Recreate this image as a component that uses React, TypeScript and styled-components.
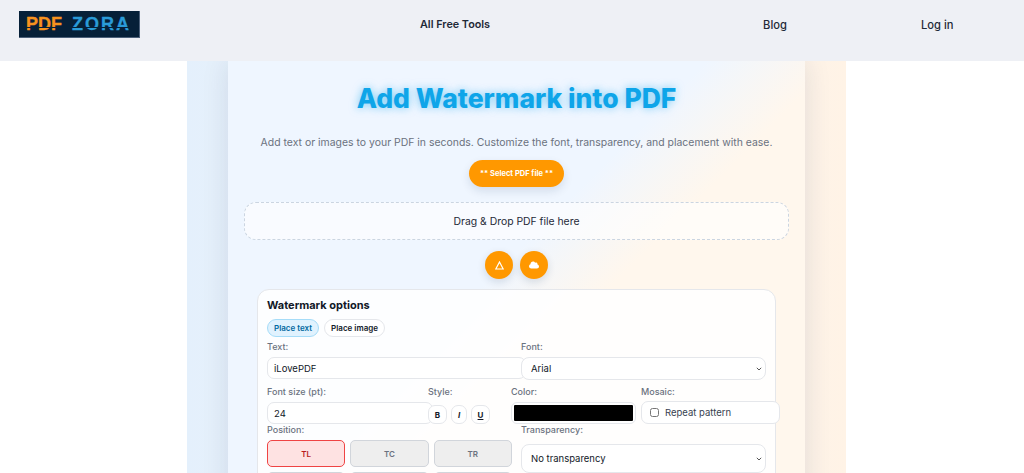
import styled, { createGlobalStyle } from 'styled-components';
import { FaCloud } from 'react-icons/fa';

const chevron =
  "data:image/svg+xml,%3Csvg xmlns='http://www.w3.org/2000/svg' width='6' height='4' viewBox='0 0 6 4' fill='none' stroke='%23555' stroke-width='1'%3E%3Cpath d='M.8.8 3 3l2.2-2.2'/%3E%3C/svg%3E";

const GlobalStyle = createGlobalStyle`
  html, body {
    margin: 0;
    padding: 0;
    height: 473px;
    overflow: hidden;
    background: #ffffff;
    font-family: Inter, "Liberation Sans", sans-serif;
  }
`;

const Header = styled.header`
  position: relative;
  z-index: 1;
  display: flex;
  align-items: flex-start;
  height: 61px;
  padding: 11px 0 0 19px;
  box-sizing: border-box;
  background: #eef0f5;
`;

const Logo = styled.div`
  position: relative;
  display: flex;
  align-items: center;
  gap: 10px;
  width: 121px;
  height: 27px;
  padding-left: 7px;
  box-sizing: border-box;
  background: #062038;
  border-right: 1px solid #4b5f78;
  border-bottom: 1px solid #4b5f78;
  font-family: "Liberation Sans", sans-serif;
  font-size: 18px;
  font-weight: 700;
  line-height: 27px;

  /* stencil cut through the letters */
  &::after {
    content: '';
    position: absolute;
    left: 6px;
    right: 8px;
    top: 16px;
    height: 1px;
    background: #062038;
  }
`;

const LogoPart = styled.span<{ $color: string; $spacing: number }>`
  color: ${(p) => p.$color};
  letter-spacing: ${(p) => p.$spacing}px;
  -webkit-text-stroke: 0.3px ${(p) => p.$color};
`;

const NavLink = styled.a<{ $left: number; $bold?: boolean }>`
  margin-left: ${(p) => p.$left}px;
  margin-top: 6px;
  color: #1f2937;
  font-size: ${(p) => (p.$bold ? 10.8 : 11.2)}px;
  font-weight: ${(p) => (p.$bold ? 600 : 500)};
  line-height: 16px;
`;

const Page = styled.main`
  width: 659px;
  margin-left: 187px;
  padding: 0 41px;
  box-sizing: border-box;
  background: linear-gradient(90deg, #e4f0fc, #fff3e6);
`;

const Card = styled.section`
  display: flex;
  flex-direction: column;
  align-items: center;
  width: 577px;
  padding: 19px 16px 24px;
  box-sizing: border-box;
  background: linear-gradient(135deg, #eff6ff 0%, #eff6ff 44%, #fff7ed 56%, #fff7ed 100%);
  box-shadow: 0 0 26px rgba(15, 40, 80, 0.11);
`;

const Title = styled.h1`
  margin: 0;
  color: #0ea5e9;
  font-size: 26.5px;
  font-weight: 800;
  line-height: 36px;
  text-shadow: 0 0 8px rgba(14, 165, 233, 0.55);
`;

const Subtitle = styled.p`
  margin: 19px 0 0;
  color: #6b7280;
  font-size: 10.45px;
  line-height: 16px;
  white-space: nowrap;
`;

const SelectButton = styled.button`
  width: 95px;
  height: 27px;
  margin-top: 9px;
  padding: 0;
  border: 0;
  border-radius: 14px;
  background: #ff9800;
  box-shadow: 0 4px 10px rgba(15, 40, 80, 0.12);
  color: #ffffff;
  font-family: inherit;
  font-size: 7.5px;
  font-weight: 700;
`;

const DropZone = styled.div`
  display: flex;
  align-items: center;
  justify-content: center;
  width: 100%;
  height: 38px;
  margin-top: 15px;
  box-sizing: border-box;
  border: 1px dashed #cbd5e1;
  border-radius: 12px;
  background: rgba(255, 255, 255, 0.6);
  color: #1f2937;
  font-size: 10.4px;
`;

const CloudRow = styled.div`
  display: flex;
  gap: 7px;
  margin-top: 11px;
`;

const RoundButton = styled.button`
  display: flex;
  align-items: center;
  justify-content: center;
  width: 28px;
  height: 28px;
  padding: 0;
  border: 0;
  border-radius: 50%;
  background: #ff9800;
  box-shadow: 0 3px 8px rgba(15, 40, 80, 0.14);
  color: #ffffff;
`;

const Options = styled.div`
  width: 519px;
  margin-top: 10px;
  padding: 9px 9px 16px;
  box-sizing: border-box;
  border: 1px solid #e5e7eb;
  border-radius: 12px;
  background: rgba(255, 255, 255, 0.85);
`;

const OptionsTitle = styled.h2`
  margin: 0;
  color: #111827;
  font-size: 11px;
  font-weight: 700;
  line-height: 13px;
`;

const Tabs = styled.div`
  display: flex;
  gap: 5px;
  margin-top: 7px;
`;

const Tab = styled.button<{ $active?: boolean }>`
  height: 18px;
  padding: 0 6px;
  border: 1px solid ${(p) => (p.$active ? '#a5dcf8' : '#e5e7eb')};
  border-radius: 9px;
  background: ${(p) => (p.$active ? '#e0f2fe' : '#ffffff')};
  color: ${(p) => (p.$active ? '#0369a1' : '#111827')};
  font-family: inherit;
  font-size: 8px;
  font-weight: 600;
`;

const TwoCols = styled.div`
  display: grid;
  grid-template-columns: 245px 245px;
  column-gap: 9px;
`;

const FourCols = styled.div`
  display: grid;
  grid-template-columns: 152px 74px 121px 125px;
  column-gap: 9px;
  margin-top: 2px;
`;

const Field = styled.div`
  display: flex;
  flex-direction: column;
  min-width: 0;
`;

const Label = styled.label<{ $tight?: boolean }>`
  color: #6b7280;
  font-size: 9px;
  font-weight: 500;
  line-height: 10px;
  margin-top: ${(p) => (p.$tight ? 1 : 5)}px;
`;

const TextInput = styled.input`
  width: 100%;
  height: 20px;
  margin-top: 5px;
  padding: 0 6px;
  border: 1px solid #e5e7eb;
  border-radius: 7px;
  background: #ffffff;
  color: #111827;
  font-family: inherit;
  font-size: 9.5px;
  outline: none;
`;

const SelectBox = styled.select<{ $tall?: boolean }>`
  appearance: none;
  width: 100%;
  height: ${(p) => (p.$tall ? 29 : 23)}px;
  margin-top: ${(p) => (p.$tall ? 9 : 5)}px;
  padding: 0 9px;
  box-sizing: border-box;
  border: 1px solid #e5e7eb;
  border-radius: 8px;
  background: #ffffff url("${chevron}") no-repeat right 3px center;
  color: #111827;
  font-family: inherit;
  font-size: 9.5px;
`;

const StyleButtons = styled.div`
  display: flex;
  gap: 4px;
  margin-top: 8px;
`;

const StyleButton = styled.button<{ $width: number; $italic?: boolean; $underline?: boolean }>`
  width: ${(p) => p.$width}px;
  height: 19px;
  padding: 0;
  border: 1px solid #e5e7eb;
  border-radius: 7px;
  background: #ffffff;
  color: #111827;
  font-family: inherit;
  font-size: 8px;
  font-weight: 700;
  font-style: ${(p) => (p.$italic ? 'italic' : 'normal')};
  text-decoration: ${(p) => (p.$underline ? 'underline' : 'none')};
`;

const ColorInput = styled.input`
  width: 125px;
  height: 22px;
  margin-top: 5px;
  padding: 2px;
  box-sizing: border-box;
  border: 1px solid #e5e7eb;
  border-radius: 6px;
  background: #ffffff;

  &::-webkit-color-swatch-wrapper {
    padding: 0;
  }

  &::-webkit-color-swatch {
    border: 0;
    border-radius: 1px;
  }
`;

const Mosaic = styled.label`
  display: flex;
  align-items: center;
  gap: 6px;
  width: 139px;
  height: 23px;
  margin-top: 4px;
  padding-left: 8px;
  box-sizing: border-box;
  border: 1px solid #e5e7eb;
  border-radius: 7px;
  background: #ffffff;
  color: #374151;
  font-size: 9.5px;

  input {
    width: 9px;
    height: 9px;
    margin: 0;
  }
`;

const PositionGrid = styled.div`
  display: grid;
  grid-template-columns: repeat(3, 1fr);
  gap: 5px;
  margin-top: 5px;
`;

const PositionButton = styled.button<{ $active?: boolean }>`
  height: 27px;
  padding: 0;
  border: 1.5px solid ${(p) => (p.$active ? '#ef4444' : '#d1d5db')};
  border-radius: 5px;
  background: ${(p) => (p.$active ? '#fee2e2' : '#eeeeee')};
  color: ${(p) => (p.$active ? '#b91c1c' : '#6b7280')};
  font-family: inherit;
  font-size: 8px;
  font-weight: 600;
`;

const positions = ['TL', 'TC', 'TR', 'ML', 'MC', 'MR', 'BL', 'BC', 'BR'];

export default function App() {
  return (
    <>
      <GlobalStyle />
      <Header>
        <Logo>
          <LogoPart $color="#f7931e" $spacing={0}>PDF</LogoPart>
          <LogoPart $color="#2a9bd8" $spacing={2}>ZORA</LogoPart>
        </Logo>
        <NavLink $left={280} $bold>All Free Tools</NavLink>
        <NavLink $left={273}>Blog</NavLink>
        <NavLink $left={134}>Log in</NavLink>
      </Header>
      <Page>
        <Card>
          <Title>Add Watermark into PDF</Title>
          <Subtitle>Add text or images to your PDF in seconds. Customize the font, transparency, and placement with ease.</Subtitle>
          <SelectButton>** Select PDF file **</SelectButton>
          <DropZone>Drag &amp; Drop PDF file here</DropZone>
          <CloudRow>
            <RoundButton aria-label="Google Drive">
              <svg width="9" height="9" viewBox="0 0 9 9" fill="none" stroke="currentColor" strokeWidth="1.2">
                <path d="M4.5 1 8.2 8H.8Z" />
              </svg>
            </RoundButton>
            <RoundButton aria-label="Cloud">
              <FaCloud size={10} />
            </RoundButton>
          </CloudRow>
          <Options>
            <OptionsTitle>Watermark options</OptionsTitle>
            <Tabs>
              <Tab $active>Place text</Tab>
              <Tab>Place image</Tab>
            </Tabs>
            <TwoCols>
              <Field>
                <Label>Text:</Label>
                <TextInput defaultValue="iLovePDF" />
              </Field>
              <Field>
                <Label>Font:</Label>
                <SelectBox defaultValue="Arial">
                  <option>Arial</option>
                </SelectBox>
              </Field>
            </TwoCols>
            <FourCols>
              <Field>
                <Label>Font size (pt):</Label>
                <TextInput defaultValue="24" />
              </Field>
              <Field>
                <Label>Style:</Label>
                <StyleButtons>
                  <StyleButton $width={19}>B</StyleButton>
                  <StyleButton $width={16} $italic>I</StyleButton>
                  <StyleButton $width={19} $underline>U</StyleButton>
                </StyleButtons>
              </Field>
              <Field>
                <Label>Color:</Label>
                <ColorInput type="color" defaultValue="#000000" />
              </Field>
              <Field>
                <Label>Mosaic:</Label>
                <Mosaic>
                  <input type="checkbox" />
                  Repeat pattern
                </Mosaic>
              </Field>
            </FourCols>
            <TwoCols>
              <Field>
                <Label $tight>Position:</Label>
                <PositionGrid>
                  {positions.map((pos) => (
                    <PositionButton key={pos} $active={pos === 'TL'}>{pos}</PositionButton>
                  ))}
                </PositionGrid>
              </Field>
              <Field>
                <Label $tight>Transparency:</Label>
                <SelectBox $tall defaultValue="No transparency">
                  <option>No transparency</option>
                </SelectBox>
              </Field>
            </TwoCols>
          </Options>
        </Card>
      </Page>
    </>
  );
}
